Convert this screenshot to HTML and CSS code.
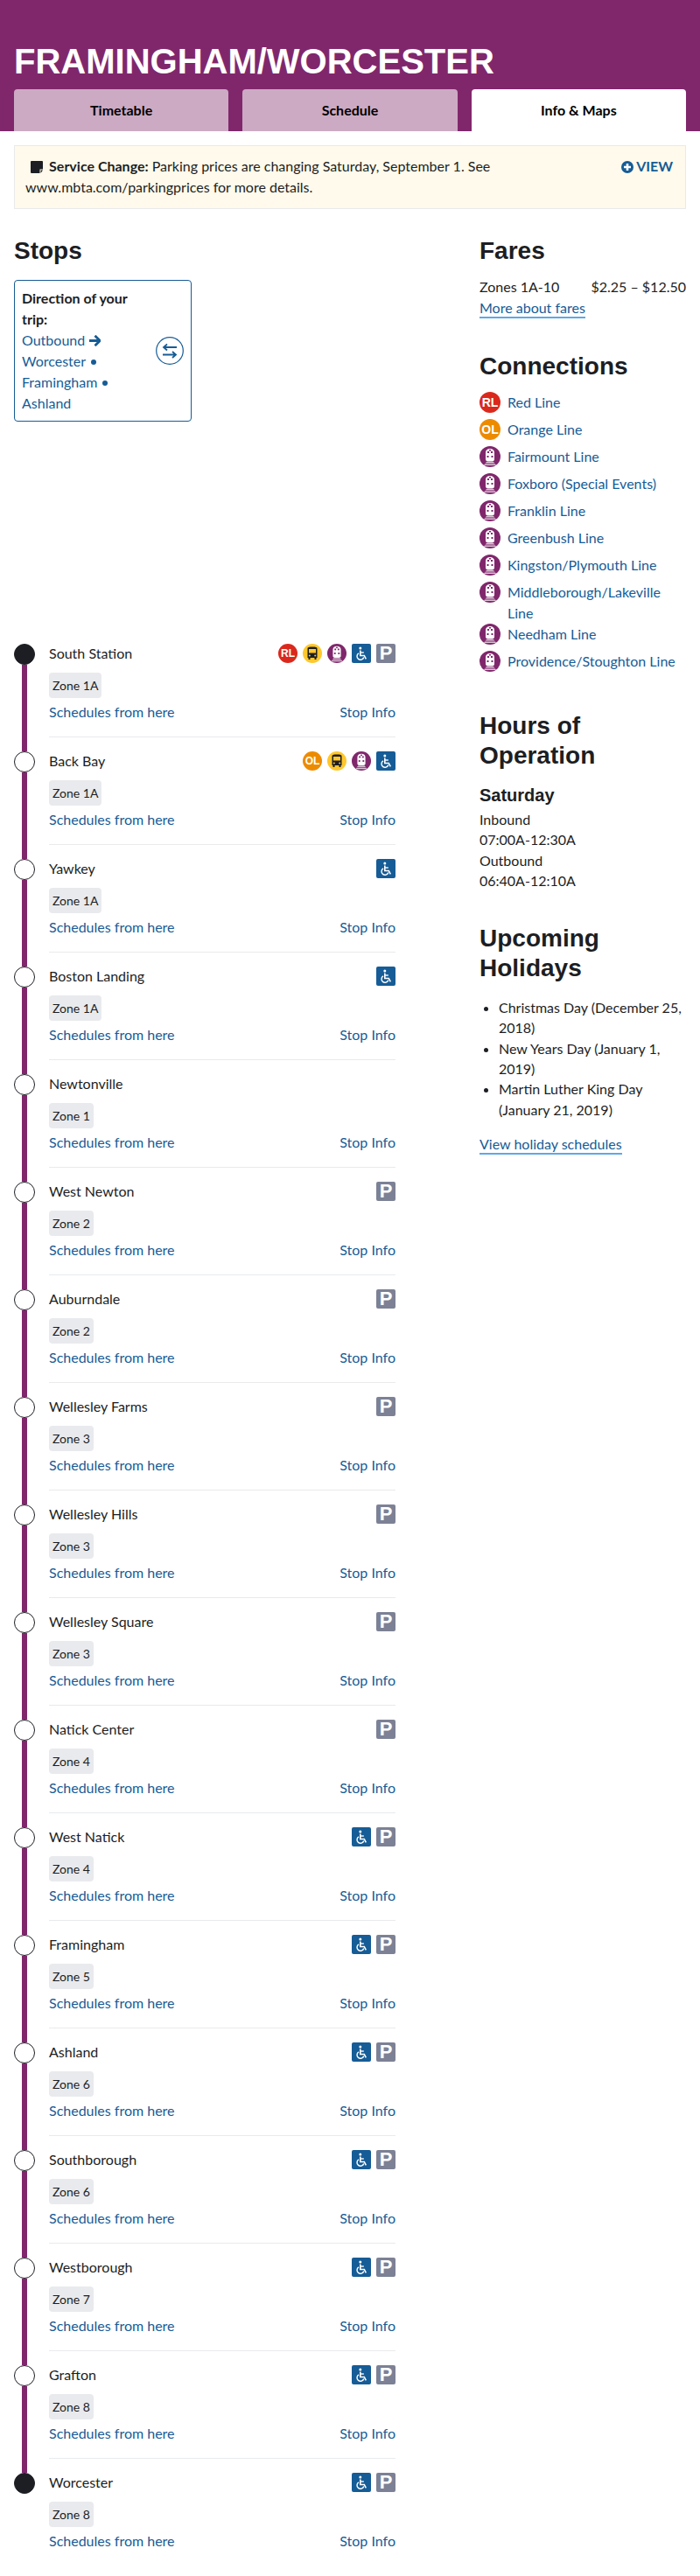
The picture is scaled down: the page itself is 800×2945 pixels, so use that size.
FILE: index.html
```html
<!DOCTYPE html>
<html lang="en">
<head>
    <meta charset="UTF-8">
    <meta name="viewport" content="width=device-width, initial-scale=1.0">
    <title>Framingham/Worcester Line</title>
    <link rel="stylesheet" href="styles.css">
</head>
<body>
    <svg class="sprite" xmlns="http://www.w3.org/2000/svg">
        <symbol id="train" viewBox="0 0 24 24">
            <circle cx="12" cy="12" r="12" fill="#80276c"/>
            <path d="M7 7.5C7 4.5 9 3 12 3s5 1.500 5 4.500V15c0 1.500-1 2.500-2.500 2.500h-5C8 17.500 7 16.500 7 15z" fill="#fff"/>
            <rect x="9" y="6" width="2" height="2" fill="#80276c"/>
            <rect x="13" y="6" width="2" height="2" fill="#80276c"/>
            <rect x="11" y="4" width="2" height="1.500" fill="#80276c"/>
            <rect x="8.500" y="11" width="2" height="2" fill="#80276c"/>
            <rect x="13.500" y="11" width="2" height="2" fill="#80276c"/>
            <path d="M8 18h8l1.500 1.500h-11zM6 20.500h12l1 1.500H5z" fill="#dcc3d6"/>
        </symbol>
        <symbol id="bus" viewBox="0 0 22 22">
            <circle cx="11" cy="11" r="11" fill="#ffc72c"/>
            <path d="M5.500 5.500C5.500 4 7 3.500 11 3.500s5.500.5 5.500 2V16h-1v2h-2v-2h-5v2h-2v-2h-1z" fill="#1c1e23"/>
            <rect x="7" y="6" width="8" height="4.500" fill="#ffc72c"/>
            <circle cx="7.800" cy="13.500" r="1" fill="#ffc72c"/>
            <circle cx="14.200" cy="13.500" r="1" fill="#ffc72c"/>
        </symbol>
        <symbol id="access" viewBox="0 0 22 22">
            <rect width="22" height="22" rx="2" fill="#165c96"/>
            <circle cx="9.800" cy="5" r="1.500" fill="#fff"/>
            <path d="M9.800 7.500v6h4.500l2 3.800" fill="none" stroke="#fff" stroke-width="1.600"/>
            <path d="M9.800 10h4" fill="none" stroke="#fff" stroke-width="1.400"/>
            <path d="M8 10.800a4 4 0 1 0 5.800 4.700" fill="none" stroke="#fff" stroke-width="1.400"/>
        </symbol>
    </svg>

    <header class="banner">
        <h1 class="banner-title">FRAMINGHAM/WORCESTER</h1>
        <nav class="tabs">
            <a class="tab" href="#">Timetable</a>
            <a class="tab" href="#">Schedule</a>
            <a class="tab tab-active" href="#">Info &amp; Maps</a>
        </nav>
    </header>

    <section class="alert">
        <p class="alert-text">
            <svg class="alert-icon" viewBox="0 0 14 14"><path d="M1 0h12a1 1 0 0 1 1 1v8.500h-3.500V14H1a1 1 0 0 1-1-1V1a1 1 0 0 1 1-1zM11.500 10.500H14L11.500 14z" fill="#1c1e23"/></svg>
            <strong>Service Change:</strong> Parking prices are changing Saturday, September 1. See www.mbta.com/parkingprices for more details.
        </p>
        <a class="alert-view" href="#">
            <svg class="plus-icon" viewBox="0 0 14 14"><circle cx="7" cy="7" r="7" fill="#165c96"/><path d="M7 3v8M3 7h8" stroke="#fff" stroke-width="2.600"/></svg>VIEW
        </a>
    </section>

    <div class="columns">
        <main class="stops-col">
            <h2 class="heading">Stops</h2>
            <div class="direction">
                <div class="direction-text">
                    <strong>Direction of your trip:</strong><br>
                    <a href="#">Outbound <svg class="arrow" viewBox="0 0 14 13"><path d="M7.500.8 13.200 6.500 7.500 12.200M12 6.500H1" fill="none" stroke="#165c96" stroke-width="2.800"/></svg></a><br>
                    <a href="#">Worcester <span class="dot"></span></a><br>
                    <a href="#">Framingham <span class="dot"></span></a><br>
                    <a href="#">Ashland</a>
                </div>
                <svg class="swap" viewBox="0 0 32 32">
                    <circle cx="16" cy="16" r="15.300" fill="none" stroke="#165c96" stroke-width="1.200"/>
                    <path d="M9 12h15M13 8.500 9 12l4 3.500M8 20.500h15M19 17l4 3.500-4 3.500" fill="none" stroke="#165c96" stroke-width="1.800"/>
                </svg>
            </div>

            <ol class="stops">
                <li class="stop stop-first">
                    <div class="rail"><span class="rail-top"></span><span class="rail-dot"></span><span class="rail-bottom"></span></div>
                    <div class="stop-body">
                        <div class="stop-head"><span>South Station</span><span class="features"><span class="route route-red">RL</span><svg class="icon"><use href="#bus"/></svg><svg class="icon"><use href="#train"/></svg><svg class="icon"><use href="#access"/></svg><span class="park">P</span></span></div>
                        <span class="zone">Zone 1A</span>
                        <div class="stop-links"><a href="#">Schedules from here</a><a href="#">Stop Info</a></div>
                    </div>
                </li>
                <li class="stop">
                    <div class="rail"><span class="rail-top"></span><span class="rail-dot"></span><span class="rail-bottom"></span></div>
                    <div class="stop-body">
                        <div class="stop-head"><span>Back Bay</span><span class="features"><span class="route route-orange">OL</span><svg class="icon"><use href="#bus"/></svg><svg class="icon"><use href="#train"/></svg><svg class="icon"><use href="#access"/></svg></span></div>
                        <span class="zone">Zone 1A</span>
                        <div class="stop-links"><a href="#">Schedules from here</a><a href="#">Stop Info</a></div>
                    </div>
                </li>
                <li class="stop">
                    <div class="rail"><span class="rail-top"></span><span class="rail-dot"></span><span class="rail-bottom"></span></div>
                    <div class="stop-body">
                        <div class="stop-head"><span>Yawkey</span><span class="features"><svg class="icon"><use href="#access"/></svg></span></div>
                        <span class="zone">Zone 1A</span>
                        <div class="stop-links"><a href="#">Schedules from here</a><a href="#">Stop Info</a></div>
                    </div>
                </li>
                <li class="stop">
                    <div class="rail"><span class="rail-top"></span><span class="rail-dot"></span><span class="rail-bottom"></span></div>
                    <div class="stop-body">
                        <div class="stop-head"><span>Boston Landing</span><span class="features"><svg class="icon"><use href="#access"/></svg></span></div>
                        <span class="zone">Zone 1A</span>
                        <div class="stop-links"><a href="#">Schedules from here</a><a href="#">Stop Info</a></div>
                    </div>
                </li>
                <li class="stop">
                    <div class="rail"><span class="rail-top"></span><span class="rail-dot"></span><span class="rail-bottom"></span></div>
                    <div class="stop-body">
                        <div class="stop-head"><span>Newtonville</span></div>
                        <span class="zone">Zone 1</span>
                        <div class="stop-links"><a href="#">Schedules from here</a><a href="#">Stop Info</a></div>
                    </div>
                </li>
                <li class="stop">
                    <div class="rail"><span class="rail-top"></span><span class="rail-dot"></span><span class="rail-bottom"></span></div>
                    <div class="stop-body">
                        <div class="stop-head"><span>West Newton</span><span class="features"><span class="park">P</span></span></div>
                        <span class="zone">Zone 2</span>
                        <div class="stop-links"><a href="#">Schedules from here</a><a href="#">Stop Info</a></div>
                    </div>
                </li>
                <li class="stop">
                    <div class="rail"><span class="rail-top"></span><span class="rail-dot"></span><span class="rail-bottom"></span></div>
                    <div class="stop-body">
                        <div class="stop-head"><span>Auburndale</span><span class="features"><span class="park">P</span></span></div>
                        <span class="zone">Zone 2</span>
                        <div class="stop-links"><a href="#">Schedules from here</a><a href="#">Stop Info</a></div>
                    </div>
                </li>
                <li class="stop">
                    <div class="rail"><span class="rail-top"></span><span class="rail-dot"></span><span class="rail-bottom"></span></div>
                    <div class="stop-body">
                        <div class="stop-head"><span>Wellesley Farms</span><span class="features"><span class="park">P</span></span></div>
                        <span class="zone">Zone 3</span>
                        <div class="stop-links"><a href="#">Schedules from here</a><a href="#">Stop Info</a></div>
                    </div>
                </li>
                <li class="stop">
                    <div class="rail"><span class="rail-top"></span><span class="rail-dot"></span><span class="rail-bottom"></span></div>
                    <div class="stop-body">
                        <div class="stop-head"><span>Wellesley Hills</span><span class="features"><span class="park">P</span></span></div>
                        <span class="zone">Zone 3</span>
                        <div class="stop-links"><a href="#">Schedules from here</a><a href="#">Stop Info</a></div>
                    </div>
                </li>
                <li class="stop">
                    <div class="rail"><span class="rail-top"></span><span class="rail-dot"></span><span class="rail-bottom"></span></div>
                    <div class="stop-body">
                        <div class="stop-head"><span>Wellesley Square</span><span class="features"><span class="park">P</span></span></div>
                        <span class="zone">Zone 3</span>
                        <div class="stop-links"><a href="#">Schedules from here</a><a href="#">Stop Info</a></div>
                    </div>
                </li>
                <li class="stop">
                    <div class="rail"><span class="rail-top"></span><span class="rail-dot"></span><span class="rail-bottom"></span></div>
                    <div class="stop-body">
                        <div class="stop-head"><span>Natick Center</span><span class="features"><span class="park">P</span></span></div>
                        <span class="zone">Zone 4</span>
                        <div class="stop-links"><a href="#">Schedules from here</a><a href="#">Stop Info</a></div>
                    </div>
                </li>
                <li class="stop">
                    <div class="rail"><span class="rail-top"></span><span class="rail-dot"></span><span class="rail-bottom"></span></div>
                    <div class="stop-body">
                        <div class="stop-head"><span>West Natick</span><span class="features"><svg class="icon"><use href="#access"/></svg><span class="park">P</span></span></div>
                        <span class="zone">Zone 4</span>
                        <div class="stop-links"><a href="#">Schedules from here</a><a href="#">Stop Info</a></div>
                    </div>
                </li>
                <li class="stop">
                    <div class="rail"><span class="rail-top"></span><span class="rail-dot"></span><span class="rail-bottom"></span></div>
                    <div class="stop-body">
                        <div class="stop-head"><span>Framingham</span><span class="features"><svg class="icon"><use href="#access"/></svg><span class="park">P</span></span></div>
                        <span class="zone">Zone 5</span>
                        <div class="stop-links"><a href="#">Schedules from here</a><a href="#">Stop Info</a></div>
                    </div>
                </li>
                <li class="stop">
                    <div class="rail"><span class="rail-top"></span><span class="rail-dot"></span><span class="rail-bottom"></span></div>
                    <div class="stop-body">
                        <div class="stop-head"><span>Ashland</span><span class="features"><svg class="icon"><use href="#access"/></svg><span class="park">P</span></span></div>
                        <span class="zone">Zone 6</span>
                        <div class="stop-links"><a href="#">Schedules from here</a><a href="#">Stop Info</a></div>
                    </div>
                </li>
                <li class="stop">
                    <div class="rail"><span class="rail-top"></span><span class="rail-dot"></span><span class="rail-bottom"></span></div>
                    <div class="stop-body">
                        <div class="stop-head"><span>Southborough</span><span class="features"><svg class="icon"><use href="#access"/></svg><span class="park">P</span></span></div>
                        <span class="zone">Zone 6</span>
                        <div class="stop-links"><a href="#">Schedules from here</a><a href="#">Stop Info</a></div>
                    </div>
                </li>
                <li class="stop">
                    <div class="rail"><span class="rail-top"></span><span class="rail-dot"></span><span class="rail-bottom"></span></div>
                    <div class="stop-body">
                        <div class="stop-head"><span>Westborough</span><span class="features"><svg class="icon"><use href="#access"/></svg><span class="park">P</span></span></div>
                        <span class="zone">Zone 7</span>
                        <div class="stop-links"><a href="#">Schedules from here</a><a href="#">Stop Info</a></div>
                    </div>
                </li>
                <li class="stop">
                    <div class="rail"><span class="rail-top"></span><span class="rail-dot"></span><span class="rail-bottom"></span></div>
                    <div class="stop-body">
                        <div class="stop-head"><span>Grafton</span><span class="features"><svg class="icon"><use href="#access"/></svg><span class="park">P</span></span></div>
                        <span class="zone">Zone 8</span>
                        <div class="stop-links"><a href="#">Schedules from here</a><a href="#">Stop Info</a></div>
                    </div>
                </li>
                <li class="stop stop-last">
                    <div class="rail"><span class="rail-top"></span><span class="rail-dot"></span><span class="rail-bottom"></span></div>
                    <div class="stop-body">
                        <div class="stop-head"><span>Worcester</span><span class="features"><svg class="icon"><use href="#access"/></svg><span class="park">P</span></span></div>
                        <span class="zone">Zone 8</span>
                        <div class="stop-links"><a href="#">Schedules from here</a><a href="#">Stop Info</a></div>
                    </div>
                </li>
            </ol>
        </main>

        <aside class="side-col">
            <h2 class="heading">Fares</h2>
            <div class="fare-row"><span>Zones 1A-10</span><span>$2.25 – $12.50</span></div>
            <a class="more-link" href="#">More about fares</a>

            <h2 class="heading side-heading">Connections</h2>
            <ul class="connections">
                <li><span class="route route-red route-large">RL</span><a href="#">Red Line</a></li>
                <li><span class="route route-orange route-large">OL</span><a href="#">Orange Line</a></li>
                <li><svg class="icon-large"><use href="#train"/></svg><a href="#">Fairmount Line</a></li>
                <li><svg class="icon-large"><use href="#train"/></svg><a href="#">Foxboro (Special Events)</a></li>
                <li><svg class="icon-large"><use href="#train"/></svg><a href="#">Franklin Line</a></li>
                <li><svg class="icon-large"><use href="#train"/></svg><a href="#">Greenbush Line</a></li>
                <li><svg class="icon-large"><use href="#train"/></svg><a href="#">Kingston/Plymouth Line</a></li>
                <li><svg class="icon-large"><use href="#train"/></svg><a href="#">Middleborough/Lakeville Line</a></li>
                <li><svg class="icon-large"><use href="#train"/></svg><a href="#">Needham Line</a></li>
                <li><svg class="icon-large"><use href="#train"/></svg><a href="#">Providence/Stoughton Line</a></li>
            </ul>

            <h2 class="heading side-heading">Hours of Operation</h2>
            <h3 class="subheading">Saturday</h3>
            <p class="hours">Inbound<br>07:00A-12:30A<br>Outbound<br>06:40A-12:10A</p>

            <h2 class="heading side-heading">Upcoming Holidays</h2>
            <ul class="holidays">
                <li>Christmas Day (December 25, 2018)</li>
                <li>New Years Day (January 1, 2019)</li>
                <li>Martin Luther King Day (January 21, 2019)</li>
            </ul>
            <a class="more-link" href="#">View holiday schedules</a>
        </aside>
    </div>
</body>
</html>
```

FILE: styles.css
```css
* {
    box-sizing: border-box;
}
body {
    margin: 0;
    font-family: Lato, "Noto Sans", sans-serif;
    font-size: 16px;
    line-height: 24px;
    color: #1c1e23;
    background-color: #fff;
}
a {
    color: #165c96;
    text-decoration: none;
}
.sprite {
    display: none;
}

/* banner */
.banner {
    height: 150px;
    padding: 47px 16px 0;
    background-color: #80276c;
}
.banner-title {
    margin: 0;
    height: 55px;
    font-family: "Liberation Sans", Arial, sans-serif;
    font-size: 40px;
    line-height: 46px;
    font-weight: 700;
    color: #fff;
}
.tabs {
    display: flex;
    gap: 16px;
}
.tab {
    flex: 1;
    height: 48px;
    padding-top: 12px;
    text-align: center;
    font-weight: 700;
    color: #000;
    background-color: #ccaac4;
    border-radius: 4px 4px 0 0;
}
.tab-active {
    background-color: #fff;
}

/* alert */
.alert {
    display: flex;
    justify-content: space-between;
    margin: 16px 16px 0;
    padding: 11px 14px 12px 12px;
    min-height: 73px;
    background-color: #fffaeb;
    border: 1px solid #e9eaed;
}
.alert-text {
    margin: 0;
    width: 565px;
}
.alert-icon {
    width: 14px;
    height: 14px;
    margin: 0 3px 0 6px;
    vertical-align: -2px;
}
.alert-view {
    font-weight: 700;
    white-space: nowrap;
}
.plus-icon {
    width: 14px;
    height: 14px;
    margin-right: 3px;
    vertical-align: -2px;
}

/* columns */
.columns {
    display: flex;
    justify-content: space-between;
    padding: 0 16px 22px;
}
.stops-col {
    width: 436px;
}
.side-col {
    width: 236px;
}
.heading {
    margin: 31px 0 16px;
    font-family: "Liberation Sans", Arial, sans-serif;
    font-size: 28px;
    line-height: 34px;
    font-weight: 700;
}
.side-heading {
    margin-top: 38px;
}

/* direction box */
.direction {
    display: flex;
    align-items: center;
    justify-content: space-between;
    width: 203px;
    height: 162px;
    padding: 8px 8px 8px 8px;
    border: 1px solid #165c96;
    border-radius: 4px;
}
.direction-text {
    width: 140px;
}
.arrow {
    width: 14px;
    height: 13px;
    vertical-align: -1px;
}
.dot {
    display: inline-block;
    width: 6px;
    height: 6px;
    margin-left: 2px;
    border-radius: 50%;
    vertical-align: 2px;
    background-color: #165c96;
}
.swap {
    width: 32px;
    height: 32px;
    flex: none;
}

/* stops list */
.stops {
    margin: 238px 0 0;
    padding: 0;
    list-style: none;
}
.stop {
    display: flex;
}
.rail {
    display: flex;
    flex-direction: column;
    align-items: center;
    flex: none;
    width: 24px;
    margin-right: 16px;
}
.rail-top {
    height: 16px;
    width: 6px;
    background-color: #80276c;
}
.rail-dot {
    flex: none;
    width: 24px;
    height: 24px;
    border: 1px solid #1c1e23;
    border-radius: 50%;
    background-color: #fff;
}
.rail-bottom {
    flex: 1;
    width: 6px;
    background-color: #80276c;
}
.stop-first .rail-top,
.stop-last .rail-bottom {
    background-color: transparent;
}
.stop-first .rail-dot,
.stop-last .rail-dot {
    background-color: #1c1e23;
}
.stop-body {
    flex: 1;
    padding: 16px 0;
    border-bottom: 1px solid #e9eaed;
}
.stop-last .stop-body {
    border-bottom: 0;
}
.stop-head {
    display: flex;
    justify-content: space-between;
    align-items: center;
    min-height: 17px;
    line-height: 22px;
    margin-bottom: 11px;
}
.features {
    display: flex;
    gap: 6px;
}
.icon {
    display: block;
    width: 22px;
    height: 22px;
}
.route {
    display: block;
    width: 22px;
    height: 22px;
    border-radius: 50%;
    text-align: center;
    font-family: "Liberation Sans", Arial, sans-serif;
    font-size: 12px;
    line-height: 22px;
    font-weight: 700;
    color: #fff;
}
.route-red {
    background-color: #da291c;
}
.route-orange {
    background-color: #ed8b00;
}
.park {
    display: block;
    width: 22px;
    height: 22px;
    border-radius: 2px;
    text-align: center;
    font-family: "Liberation Sans", Arial, sans-serif;
    font-size: 22px;
    line-height: 22px;
    font-weight: 700;
    color: #fff;
    background-color: #7c8195;
}
.zone {
    display: inline-block;
    height: 29px;
    padding: 0 4px;
    font-size: 14px;
    line-height: 29px;
    border-radius: 4px;
    vertical-align: top;
    background-color: #e9eaed;
}
.stop-links {
    display: flex;
    justify-content: space-between;
    margin-top: 4px;
}

/* sidebar */
.fare-row {
    display: flex;
    justify-content: space-between;
    margin-top: -4px;
}
.more-link {
    display: inline-block;
    line-height: 21px;
    border-bottom: 2px solid #5da9e8;
}
.connections {
    margin: -4px 0 0;
    padding: 0;
    list-style: none;
}
.connections li {
    display: flex;
    min-height: 31px;
    gap: 8px;
}
.icon-large {
    display: block;
    flex: none;
    width: 24px;
    height: 24px;
}
.route-large {
    flex: none;
    width: 24px;
    height: 24px;
    font-size: 14px;
    line-height: 24px;
}
.subheading {
    margin: 0 0 4px;
    font-family: "Liberation Sans", Arial, sans-serif;
    font-size: 20px;
    line-height: 24px;
    font-weight: 700;
}
.hours {
    margin: 0;
    line-height: 23.3px;
}
.holidays {
    margin: 0 0 16px;
    padding-left: 22px;
    line-height: 23.3px;
}
```
